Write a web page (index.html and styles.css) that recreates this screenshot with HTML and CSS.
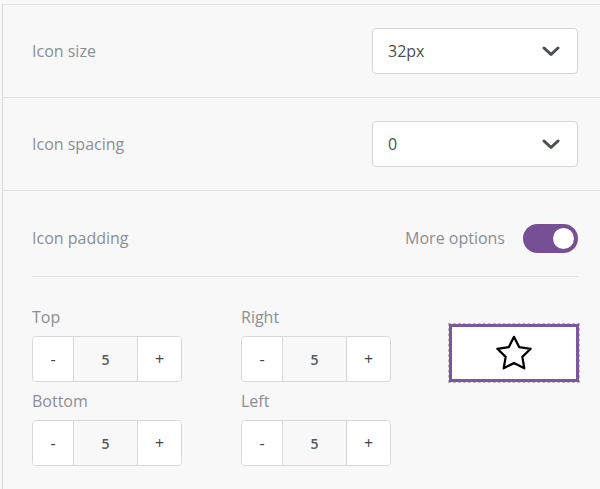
FILE: index.html
```html
<!DOCTYPE html>
<html>
<head>
<meta charset="utf-8">
<link rel="stylesheet" href="styles.css">
</head>
<body>
<div class="panel">
  <div class="row">
    <span class="label">Icon size</span>
    <div class="select"><span>32px</span>
      <svg class="chev" viewBox="0 0 18 11" width="18" height="11"><path d="M2 2 L9 8.5 L16 2" fill="none" stroke="#4a4f54" stroke-width="3" stroke-linecap="round" stroke-linejoin="round"/></svg>
    </div>
  </div>
  <div class="row">
    <span class="label">Icon spacing</span>
    <div class="select"><span>0</span>
      <svg class="chev" viewBox="0 0 18 11" width="18" height="11"><path d="M2 2 L9 8.5 L16 2" fill="none" stroke="#4a4f54" stroke-width="3" stroke-linecap="round" stroke-linejoin="round"/></svg>
    </div>
  </div>
  <div class="row padding-row">
    <div class="pad-head">
      <span class="label">Icon padding</span>
      <div class="more">
        <span class="label">More options</span>
        <div class="toggle"><div class="knob"></div></div>
      </div>
    </div>
    <div class="pad-grid">
      <div class="field">
        <div class="flabel">Top</div>
        <div class="stepper"><span class="btn">-</span><span class="val">5</span><span class="btn">+</span></div>
      </div>
      <div class="field">
        <div class="flabel">Right</div>
        <div class="stepper"><span class="btn">-</span><span class="val">5</span><span class="btn">+</span></div>
      </div>
      <div class="preview-cell">
        <div class="preview">
          <svg viewBox="0 0 24 24" width="40" height="40"><polygon points="12 2.3 15.09 8.46 22 9.47 17 14.34 18.18 21.22 12 17.97 5.82 21.22 7 14.34 2 9.47 8.91 8.46" fill="none" stroke="#000" stroke-width="1.35" stroke-linejoin="round"/></svg>
        </div>
      </div>
      <div class="field">
        <div class="flabel">Bottom</div>
        <div class="stepper"><span class="btn">-</span><span class="val">5</span><span class="btn">+</span></div>
      </div>
      <div class="field">
        <div class="flabel">Left</div>
        <div class="stepper"><span class="btn">-</span><span class="val">5</span><span class="btn">+</span></div>
      </div>
    </div>
  </div>
</div>
</body>
</html>
```

FILE: styles.css
```css
html, body {
  margin: 0;
  padding: 0;
  background: #f8f8f8;
  font-family: "Open Sans", "Noto Sans", sans-serif;
}
body {
  padding-top: 4px;
  padding-left: 2px;
}
.panel {
  border-left: 1px solid #dcdcdc;
  min-height: 485px;
}
.row {
  border-top: 1px solid #e2e2e2;
  height: 92px;
  padding: 0 22px 0 29px;
  display: flex;
  align-items: center;
  justify-content: space-between;
}
.label {
  font-size: 16px;
  font-weight: 500;
  color: #8a8f93;
}
.select {
  width: 204px;
  height: 44px;
  box-sizing: content-box;
  border: 1px solid #d4d4d4;
  border-radius: 4px;
  background: #fff;
  display: flex;
  align-items: center;
  justify-content: space-between;
  font-size: 16px;
  font-weight: 500;
  color: #4a4f54;
}
.select span { padding-left: 15px; }
.chev { margin-right: 17px; }
.padding-row {
  height: auto;
  display: block;
}
.pad-head {
  display: flex;
  align-items: center;
  justify-content: space-between;
  height: 77px;
  padding-top: 8px;
  border-bottom: 1px solid #e2e2e2;
}
.more {
  display: flex;
  align-items: center;
  gap: 18px;
}
.toggle {
  width: 55px;
  height: 29px;
  border-radius: 15px;
  background: #774f95;
  position: relative;
  margin-top: 1px;
}
.knob {
  position: absolute;
  width: 21px;
  height: 21px;
  border-radius: 50%;
  background: #fff;
  top: 4px;
  right: 4px;
}
.pad-grid {
  display: grid;
  grid-template-columns: 209px 207px 132px;
  padding-top: 30px;
}
.flabel {
  font-size: 16px;
  font-weight: 500;
  color: #8a8f93;
  line-height: 21px;
  margin-bottom: 8px;
}
.field { margin-bottom: 9px; }
.stepper {
  display: flex;
  width: 148px;
  height: 44px;
  border: 1px solid #d8d8d8;
  border-radius: 4px;
  overflow: hidden;
  font-size: 14px;
  color: #555a5e;
}
.btn {
  background: #fff;
  display: flex;
  align-items: center;
  justify-content: center;
  font-size: 16px;
  color: #444;
}
.btn:first-child { width: 40px; border-right: 1px solid #d8d8d8; }
.btn:last-child { width: 43px; border-left: 1px solid #d8d8d8; }
.val {
  flex: 1;
  background: #f8f8f8;
  display: flex;
  align-items: center;
  justify-content: center;
  font-weight: 600;
}
.preview-cell {
  grid-row: span 2;
  padding-top: 16px;
}
.preview {
  width: 132px;
  height: 60px;
  box-sizing: border-box;
  border: 1px dashed #b8b8b8;
  background: #fff;
  display: flex;
  align-items: center;
  justify-content: center;
  box-shadow: inset 0 0 0 3px #7d56a0;
}
```
